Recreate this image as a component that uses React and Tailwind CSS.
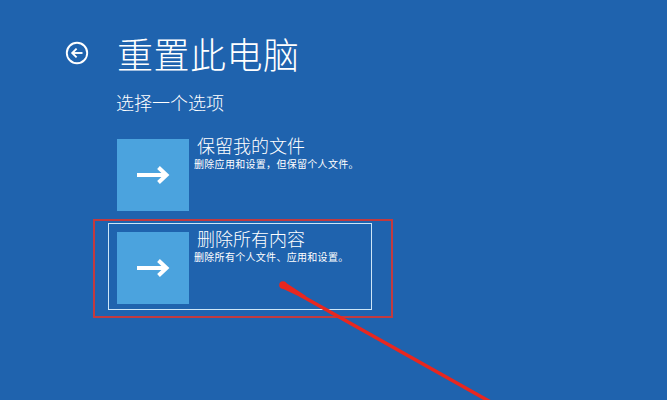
import React from "react";

const font = { fontFamily: '"Noto Sans CJK SC", "Noto Sans", sans-serif' };

function TileArrow() {
  return (
    <svg width="34" height="18" viewBox="0 0 34 18" fill="none">
      <path d="M1 9H30" stroke="white" strokeWidth="4" />
      <path d="M22.5 1.5 30.5 9l-8 7.5" stroke="white" strokeWidth="4" strokeLinejoin="miter" />
    </svg>
  );
}

function Option({ title, desc, bordered }) {
  return (
    <div
      className={
        "w-[264px] h-[87px] flex gap-[8px] p-[8px] " +
        (bordered ? "border-[1.5px] border-[#cde6f8]" : "border-[1.5px] border-transparent")
      }
    >
      <div className="w-[72px] h-[72px] shrink-0 bg-[#4ba3de] flex items-center justify-center">
        <TileArrow />
      </div>
      <div className="flex flex-col">
        <div className="text-[18px] leading-[18px] text-white font-light mt-[-3px]">{title}</div>
        <div className="text-[10px] leading-[10px] text-white mt-[5px] ml-[-3px] tracking-[0.3px]">{desc}</div>
      </div>
    </div>
  );
}

export default function App() {
  return (
    <div className="relative w-[667px] h-[400px] overflow-hidden bg-[#1f63ae]" style={font}>
      <div className="flex flex-col pl-[65px] pt-[34px]">
        <div className="flex items-center">
          <svg width="24" height="24" viewBox="0 0 24 24" fill="none" className="mr-[28px] -mt-[1px]">
            <circle cx="12" cy="12" r="10.2" stroke="white" strokeWidth="1.9" />
            <path d="M17.5 12H7.5" stroke="white" strokeWidth="1.9" />
            <path d="M11.6 7.6 7.2 12l4.4 4.4" stroke="white" strokeWidth="1.9" />
          </svg>
          <div className="text-[36px] leading-[38px] text-white font-light tracking-[0.5px]">重置此电脑</div>
        </div>
        <div className="pl-[51px] mt-[19px] text-[18px] leading-[22px] text-white font-light">选择一个选项</div>
        <div className="flex flex-col gap-[6px] ml-[43px] mt-[17px]">
          <Option title="保留我的文件" desc="删除应用和设置，但保留个人文件。" />
          <Option title="删除所有内容" desc="删除所有个人文件、应用和设置。" bordered />
        </div>
      </div>

      <div className="absolute left-[93px] top-[219px] w-[300px] h-[99px] border-2 border-[#c33a3e]" />

      <svg className="absolute inset-0" width="667" height="400" viewBox="0 0 667 400">
        <polygon points="281.3,288.1 284.7,281.9 305.7,295.8 303.9,298.8" fill="#e8271f" />
        <circle cx="283" cy="285" r="3.8" fill="#e8271f" />
        <line x1="300" y1="295" x2="512" y2="414" stroke="#e8271f" strokeWidth="3.5" />
      </svg>
    </div>
  );
}
